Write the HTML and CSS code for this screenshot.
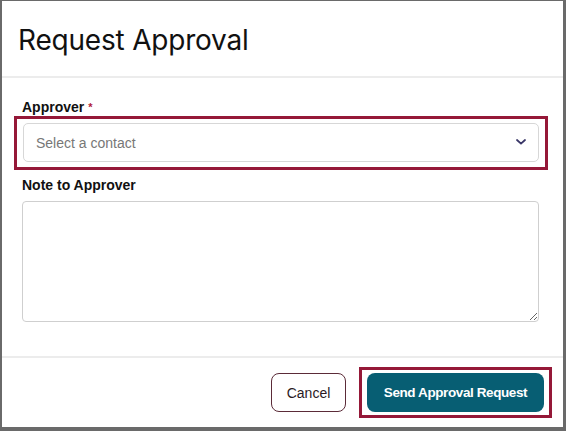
FILE: index.html
```html
<!DOCTYPE html>
<html lang="en">
<head>
    <meta charset="UTF-8">
    <meta name="viewport" content="width=device-width, initial-scale=1.0">
    <title>Request Approval</title>
    <link rel="stylesheet" href="styles.css">
</head>
<body>
    <div class="modal">
        <div class="modal-header">
            <h1>Request Approval</h1>
        </div>

        <div class="modal-body">
            <label class="field-label">Approver <span class="required">*</span></label>
            <div class="highlight highlight-select">
                <div class="select">
                    <span class="placeholder">Select a contact</span>
                    <svg class="chevron" width="10" height="6" viewBox="0 0 10 6">
                        <path d="M1 1l4 3.6L9 1" fill="none" stroke="#3a3768" stroke-width="1.8" stroke-linecap="round"/>
                    </svg>
                </div>
            </div>

            <label class="field-label note-label">Note to Approver</label>
            <textarea class="note"></textarea>
        </div>

        <div class="modal-footer">
            <button class="btn btn-cancel">Cancel</button>
            <div class="highlight highlight-btn">
                <button class="btn btn-send">Send Approval Request</button>
            </div>
        </div>
    </div>
</body>
</html>
```

FILE: styles.css
```css
html, body {
    margin: 0;
    padding: 0;
    background: #fff;
}
body {
    font-family: "Liberation Sans", Arial, sans-serif;
    color: #1a1a1a;
}
.modal {
    width: 561px;
    height: 426px;
    border-top: 1px solid #6a6a6a;
    border-left: 2px solid #6a6a6a;
    border-right: 3px solid #6a6a6a;
    border-bottom: 4px solid #6a6a6a;
    display: flex;
    flex-direction: column;
    background: #fff;
}
.modal-header {
    height: 75px;
    padding-left: 16px;
    border-bottom: 2px solid #ececec;
    display: flex;
    align-items: center;
}
.modal-header h1 {
    margin: 2px 0 0;
    font-family: "Inter", "Liberation Sans", sans-serif;
    font-weight: 400;
    font-size: 28px;
    letter-spacing: -0.2px;
    color: #111;
}
.modal-body {
    padding: 21px 24px 34px 12px;
    border-bottom: 2px solid #ececec;
    display: flex;
    flex-direction: column;
}
.field-label {
    display: block;
    font-size: 14px;
    font-weight: 700;
    color: #111;
    margin-left: 8px;
    line-height: 16px;
}
.required {
    color: #b11a3c;
    font-size: 11px;
    vertical-align: top;
}
.highlight {
    border: 3px solid #951838;
}
.highlight-select {
    margin: 1px -9px 0 0;
    padding: 4px 6px 5px;
}
.select {
    height: 39px;
    box-sizing: border-box;
    border: 1px solid #d7d7d7;
    border-radius: 5px;
    display: flex;
    align-items: center;
    justify-content: space-between;
    padding: 0 12px 0 12px;
}
.placeholder {
    font-size: 14px;
    color: #777;
}
.chevron {
    margin-top: -1px;
}
.note-label {
    margin-top: 7px;
}
.note {
    margin: 8px 0 0 8px;
    height: 121px;
    box-sizing: border-box;
    border: 1px solid #cfcfcf;
    border-radius: 4px;
    resize: vertical;
    font-family: inherit;
    padding: 0;
}
.modal-footer {
    flex: 1;
    display: flex;
    align-items: center;
    justify-content: flex-end;
    gap: 13px;
    padding-right: 11px;
}
.btn {
    font-family: "Liberation Sans", Arial, sans-serif;
    font-size: 14px;
    border-radius: 8px;
    height: 39px;
    cursor: pointer;
}
.btn-cancel {
    background: #fff;
    color: #2b1a1f;
    border: 1px solid #5b2b38;
    padding: 0;
    width: 75px;
}
.highlight-btn {
    padding: 3px 5px;
}
.btn-send {
    background: #075e73;
    color: #fff;
    font-size: 13.5px;
    font-weight: 700;
    letter-spacing: -0.4px;
    border: none;
    width: 177px;
}
```
